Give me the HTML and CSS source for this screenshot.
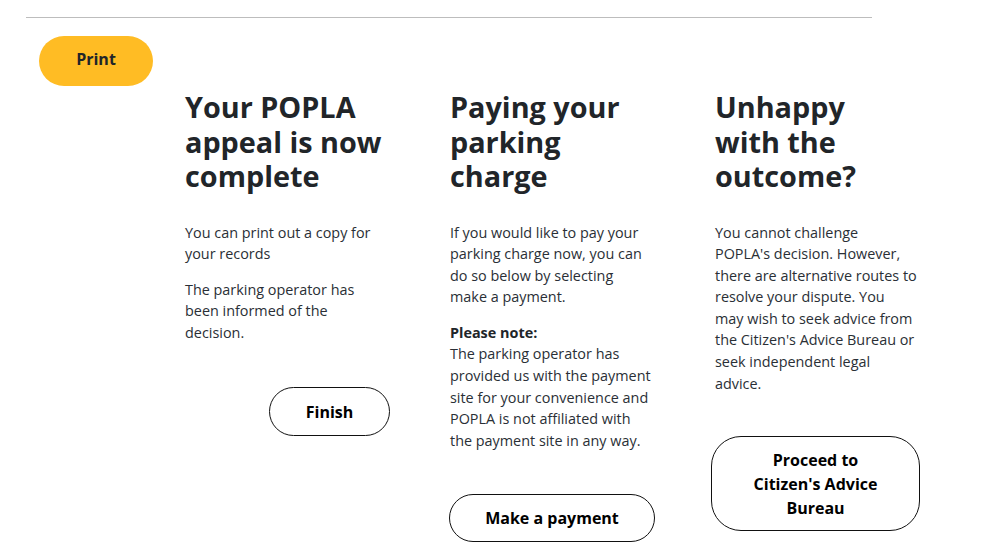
FILE: index.html
```html
<!DOCTYPE html>
<html lang="en">
<head>
<meta charset="utf-8">
<title>POPLA appeal complete</title>
<link rel="stylesheet" href="styles.css">
</head>
<body>
<div class="page">
  <hr class="rule">
  <div class="toolbar">
    <button class="btn btn-print" type="button">Print</button>
  </div>
  <div class="columns">
    <section class="col col-appeal">
      <h2 class="col-title">Your POPLA<br>appeal is now<br>complete</h2>
      <p class="text">You can print out a copy for your records</p>
      <p class="text">The parking operator has been informed of the decision.</p>
      <button class="btn btn-outline btn-finish" type="button">Finish</button>
    </section>
    <section class="col col-pay">
      <h2 class="col-title">Paying your<br>parking<br>charge</h2>
      <p class="text">If you would like to pay your parking charge now, you can do so below by selecting make a payment.</p>
      <p class="text"><strong>Please note:</strong><br>The parking operator has provided us with the payment site for your convenience and POPLA is not affiliated with the payment site in any way.</p>
      <button class="btn btn-outline btn-pay" type="button">Make a payment</button>
    </section>
    <section class="col col-outcome">
      <h2 class="col-title">Unhappy<br>with the<br>outcome?</h2>
      <p class="text">You cannot challenge<br>POPLA's decision. However, there are alternative routes to resolve your dispute. You<br>may wish to seek advice from the Citizen's Advice Bureau or seek independent legal advice.</p>
      <button class="btn btn-outline btn-cab" type="button">Proceed to Citizen's Advice Bureau</button>
    </section>
  </div>
</div>
</body>
</html>
```
FILE: styles.css
```css
* { box-sizing: border-box; }
html, body { margin: 0; padding: 0; background: #fff; }
body {
  font-family: "Open Sans", "Noto Sans", sans-serif;
  color: #212529;
}
.page { padding-top: 17px; }
.rule {
  margin: 0 0 0 26px;
  width: 846px;
  border: 0;
  border-top: 1px solid #bdbdbd;
  height: 0;
}
.toolbar { padding: 18px 0 0 39px; }
.btn {
  font-family: "Open Sans", "Noto Sans", sans-serif;
  font-weight: 700;
  font-size: 16px;
  line-height: 24px;
  cursor: pointer;
  text-align: center;
}
.btn-print {
  width: 114px;
  height: 50px;
  border: 0;
  border-radius: 25px;
  background: #ffbc24;
  color: #212529;
  padding: 0 0 4px;
}
.columns {
  display: grid;
  grid-template-columns: 265px 265px 265px;
  margin: 4px 0 0 185px;
}
.col { display: flex; flex-direction: column; align-items: flex-start; }
.col-appeal { width: 205px; }
.col-pay { width: 202px; }
.col-outcome { width: 205px; }
.col-title {
  margin: 0 0 28px;
  font-size: 28.8px;
  line-height: 34.5px;
  font-weight: 700;
  color: #212529;
}
.text {
  margin: 0 0 14px;
  font-size: 14.4px;
  line-height: 21.6px;
  color: #2a2f36;
}
.text strong { font-weight: 700; color: #212529; }
.btn-outline {
  margin-top: 29px;
  background: #fff;
  color: #000;
  border: 1px solid #111;
  border-radius: 25px;
  padding: 0;
  white-space: nowrap;
}
.btn-finish { margin-top: 30px; margin-left: 84px; width: 121px; height: 49px; }
.btn-pay { margin-left: -1px; width: 206px; height: 48px; }
.btn-cab {
  margin-top: 28px;
  margin-left: -4px;
  width: 209px;
  height: 95px;
  border-radius: 30px;
  padding: 0 36px;
  white-space: normal;
}
```
